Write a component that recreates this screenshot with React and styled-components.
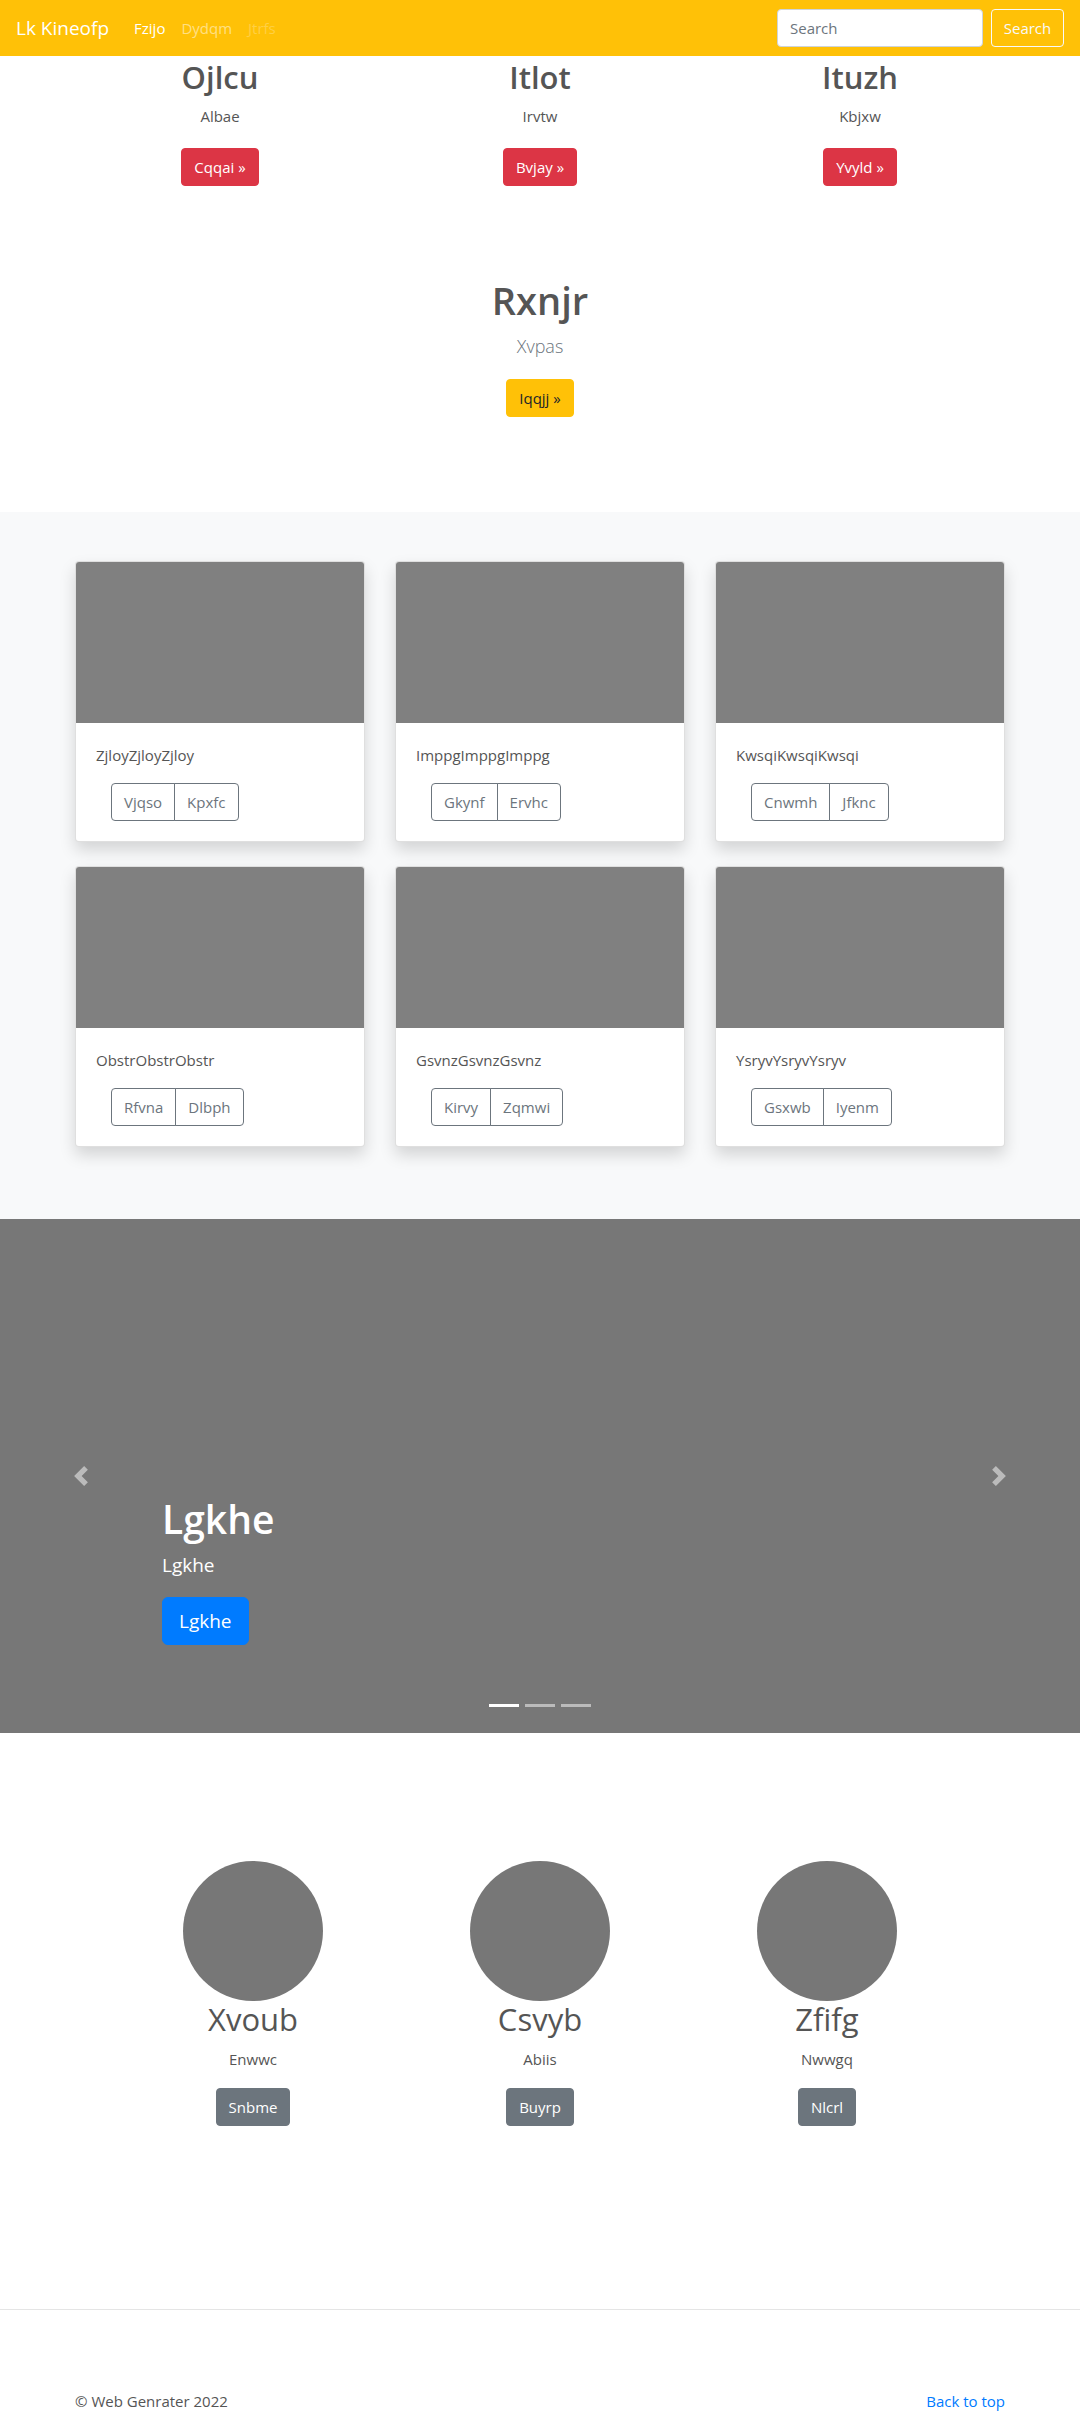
import React from 'react';
import styled, { createGlobalStyle } from 'styled-components';

const GlobalStyle = createGlobalStyle`
  * { box-sizing: border-box; }
  body {
    margin: 0;
    font-family: "Open Sans", "Liberation Sans", sans-serif;
    font-size: 15px;
    line-height: 24px;
    color: #555;
    background: #fff;
  }
`;

const Navbar = styled.nav`
  height: 56px;
  background: #ffc107;
  display: flex;
  align-items: center;
  padding: 0 16px;
`;

const Brand = styled.a`
  font-size: 19px;
  color: #fff;
  margin-right: 17px;
  line-height: 30px;
`;

const NavLinks = styled.div`
  display: flex;
  flex: 1;
`;

const NavLink = styled.a`
  padding: 8px;
  font-size: 15px;
  color: ${(p) => (p.active ? '#fff' : p.disabled ? 'rgba(255,255,255,.25)' : 'rgba(255,255,255,.5)')};
`;

const SearchForm = styled.form`
  display: flex;
  gap: 8px;
`;

const SearchInput = styled.input`
  width: 206px;
  height: 38px;
  padding: 6px 12px;
  font: 15px "Open Sans", sans-serif;
  color: #495057;
  border: 1px solid #ced4da;
  border-radius: 4px;
  background: #fff;
  &::placeholder { color: #6c757d; }
`;

const OutlineLight = styled.button`
  height: 38px;
  width: 73px;
  font: 15px "Open Sans", sans-serif;
  color: #f8f9fa;
  background: transparent;
  border: 1px solid #f8f9fa;
  border-radius: 4px;
`;

const Container = styled.div`
  width: 960px;
  margin: 0 auto;
`;

const TopRow = styled(Container)`
  display: grid;
  grid-template-columns: repeat(3, 1fr);
  text-align: center;
  padding-top: 3px;
`;

const Col = styled.div`
  display: flex;
  flex-direction: column;
  align-items: center;
`;

const Title = styled.h2`
  margin: 0 0 8px;
  font-size: 31px;
  line-height: 37px;
  font-weight: 600;
`;

const Text = styled.p`
  margin: 0 0 ${(p) => p.mb || 16}px;
`;

const Btn = styled.a`
  display: inline-block;
  padding: 6px 12px;
  font-size: 15px;
  line-height: 24px;
  border: 1px solid ${(p) => p.bg};
  border-radius: 4px;
  background: ${(p) => p.bg};
  color: ${(p) => p.color || '#fff'};
`;

const Hero = styled.section`
  display: flex;
  flex-direction: column;
  align-items: center;
  padding: 91px 0 95px;
`;

const HeroTitle = styled.h1`
  margin: 0 0 10px;
  font-size: 38px;
  line-height: 46px;
  font-weight: 600;
`;

const Lead = styled.p`
  margin: 0 0 19px;
  font-size: 18px;
  line-height: 27px;
  font-weight: 300;
  color: #6c757d;
`;

const Album = styled.section`
  background: #f8f9fa;
  padding: 49px 0 72px;
`;

const CardGrid = styled.div`
  width: 930px;
  margin: 0 auto;
  display: grid;
  grid-template-columns: repeat(3, 290px);
  column-gap: 30px;
  row-gap: 24px;
`;

const Card = styled.div`
  background: #fff;
  border: 1px solid rgba(0, 0, 0, 0.125);
  border-radius: 4px;
  overflow: hidden;
  box-shadow: 0 8px 16px rgba(0, 0, 0, 0.15);
`;

const CardImage = styled.div`
  height: 161px;
  background: #808080;
`;

const CardBody = styled.div`
  padding: 20px;
`;

const BtnGroup = styled.div`
  display: inline-flex;
  margin-left: 15px;
`;

const GroupBtn = styled.button`
  padding: 6px 12px;
  font: 15px/24px "Open Sans", sans-serif;
  color: #6c757d;
  background: transparent;
  border: 1px solid #6c757d;
  border-radius: 4px 0 0 4px;
  & + & {
    margin-left: -1px;
    border-radius: 0 4px 4px 0;
  }
`;

const Carousel = styled.section`
  position: relative;
  height: 514px;
  background: #777;
  display: flex;
  flex-direction: column;
  justify-content: flex-end;
  align-items: flex-start;
  padding: 0 0 88px 162px;
  color: #fff;
`;

const CaptionTitle = styled.h1`
  margin: 0 0 9px;
  font-size: 39px;
  line-height: 47px;
  font-weight: 600;
`;

const CaptionText = styled.p`
  margin: 0 0 18px;
  font-size: 19px;
  line-height: 28px;
`;

const BtnLarge = styled.a`
  padding: 8px 16px;
  font-size: 19px;
  line-height: 30px;
  border: 1px solid #007bff;
  border-radius: 6px;
  background: #007bff;
  color: #fff;
`;

const Control = styled.span`
  position: absolute;
  top: 0;
  bottom: 0;
  ${(p) => (p.right ? 'right: 0;' : 'left: 0;')}
  width: 162px;
  display: flex;
  align-items: center;
  justify-content: center;
  opacity: 0.5;
`;

const Indicators = styled.ol`
  position: absolute;
  left: 0;
  right: 0;
  bottom: 16px;
  margin: 0;
  padding: 0;
  list-style: none;
  display: flex;
  justify-content: center;
`;

const Indicator = styled.li`
  width: 30px;
  height: 3px;
  margin: 10px 3px;
  background: #fff;
  opacity: ${(p) => (p.active ? 1 : 0.5)};
`;

const Team = styled.section`
  width: 861px;
  margin: 0 auto;
  padding: 128px 0 183px;
  display: grid;
  grid-template-columns: repeat(3, 1fr);
  text-align: center;
`;

const Avatar = styled.div`
  width: 140px;
  height: 140px;
  border-radius: 50%;
  background: #777;
`;

const Name = styled.h2`
  margin: 0 0 9px;
  font-size: 31px;
  line-height: 37px;
  font-weight: 400;
`;

const Divider = styled.hr`
  margin: 0;
  border: 0;
  border-top: 1px solid rgba(0, 0, 0, 0.1);
`;

const Footer = styled.footer`
  width: 930px;
  margin: 0 auto;
  padding: 79px 0 24px;
  display: flex;
  justify-content: space-between;
`;

const FooterLink = styled.a`
  color: #007bff;
`;

const Chevron = ({ right }) => (
  <svg width="20" height="20" viewBox="0 0 8 8" fill="#fff">
    {right ? (
      <path d="M2.75 0l-1.5 1.5L3.75 4l-2.5 2.5L2.75 8l4-4-4-4z" />
    ) : (
      <path d="M5.25 0l-4 4 4 4 1.5-1.5L4.25 4l2.5-2.5L5.25 0z" />
    )}
  </svg>
);

const tops = [
  { title: 'Ojlcu', text: 'Albae', btn: 'Cqqai' },
  { title: 'Itlot', text: 'Irvtw', btn: 'Bvjay' },
  { title: 'Ituzh', text: 'Kbjxw', btn: 'Yvyld' },
];

const cards = [
  { text: 'Zjloy', a: 'Vjqso', b: 'Kpxfc' },
  { text: 'Imppg', a: 'Gkynf', b: 'Ervhc' },
  { text: 'Kwsqi', a: 'Cnwmh', b: 'Jfknc' },
  { text: 'Obstr', a: 'Rfvna', b: 'Dlbph' },
  { text: 'Gsvnz', a: 'Kirvy', b: 'Zqmwi' },
  { text: 'Ysryv', a: 'Gsxwb', b: 'Iyenm' },
];

const team = [
  { name: 'Xvoub', text: 'Enwwc', btn: 'Snbme' },
  { name: 'Csvyb', text: 'Abiis', btn: 'Buyrp' },
  { name: 'Zfifg', text: 'Nwwgq', btn: 'Nlcrl' },
];

const App = () => {
  return (
    <>
      <GlobalStyle />
      <Navbar>
        <Brand>Lk Kineofp</Brand>
        <NavLinks>
          <NavLink active>Fzijo</NavLink>
          <NavLink>Dydqm</NavLink>
          <NavLink disabled>Jtrfs</NavLink>
        </NavLinks>
        <SearchForm onSubmit={(e) => e.preventDefault()}>
          <SearchInput type="text" placeholder="Search" />
          <OutlineLight type="submit">Search</OutlineLight>
        </SearchForm>
      </Navbar>

      <TopRow>
        {tops.map((t) => (
          <Col key={t.title}>
            <Title>{t.title}</Title>
            <Text mb={20}>{t.text}</Text>
            <Btn bg="#dc3545">{t.btn} &raquo;</Btn>
          </Col>
        ))}
      </TopRow>

      <Hero>
        <HeroTitle>Rxnjr</HeroTitle>
        <Lead>Xvpas</Lead>
        <Btn bg="#ffc107" color="#212529">Iqqjj &raquo;</Btn>
      </Hero>

      <Album>
        <CardGrid>
          {cards.map((c) => (
            <Card key={c.text}>
              <CardImage />
              <CardBody>
                <Text>{c.text + c.text + c.text}</Text>
                <BtnGroup>
                  <GroupBtn>{c.a}</GroupBtn>
                  <GroupBtn>{c.b}</GroupBtn>
                </BtnGroup>
              </CardBody>
            </Card>
          ))}
        </CardGrid>
      </Album>

      <Carousel>
        <Control>
          <Chevron />
        </Control>
        <Control right>
          <Chevron right />
        </Control>
        <CaptionTitle>Lgkhe</CaptionTitle>
        <CaptionText>Lgkhe</CaptionText>
        <BtnLarge>Lgkhe</BtnLarge>
        <Indicators>
          <Indicator active />
          <Indicator />
          <Indicator />
        </Indicators>
      </Carousel>

      <Team>
        {team.map((m) => (
          <Col key={m.name}>
            <Avatar />
            <Name>{m.name}</Name>
            <Text mb={17}>{m.text}</Text>
            <Btn bg="#6c757d">{m.btn}</Btn>
          </Col>
        ))}
      </Team>

      <Divider />
      <Footer>
        <span>© Web Genrater 2022</span>
        <FooterLink>Back to top</FooterLink>
      </Footer>
    </>
  );
};

export default App;
